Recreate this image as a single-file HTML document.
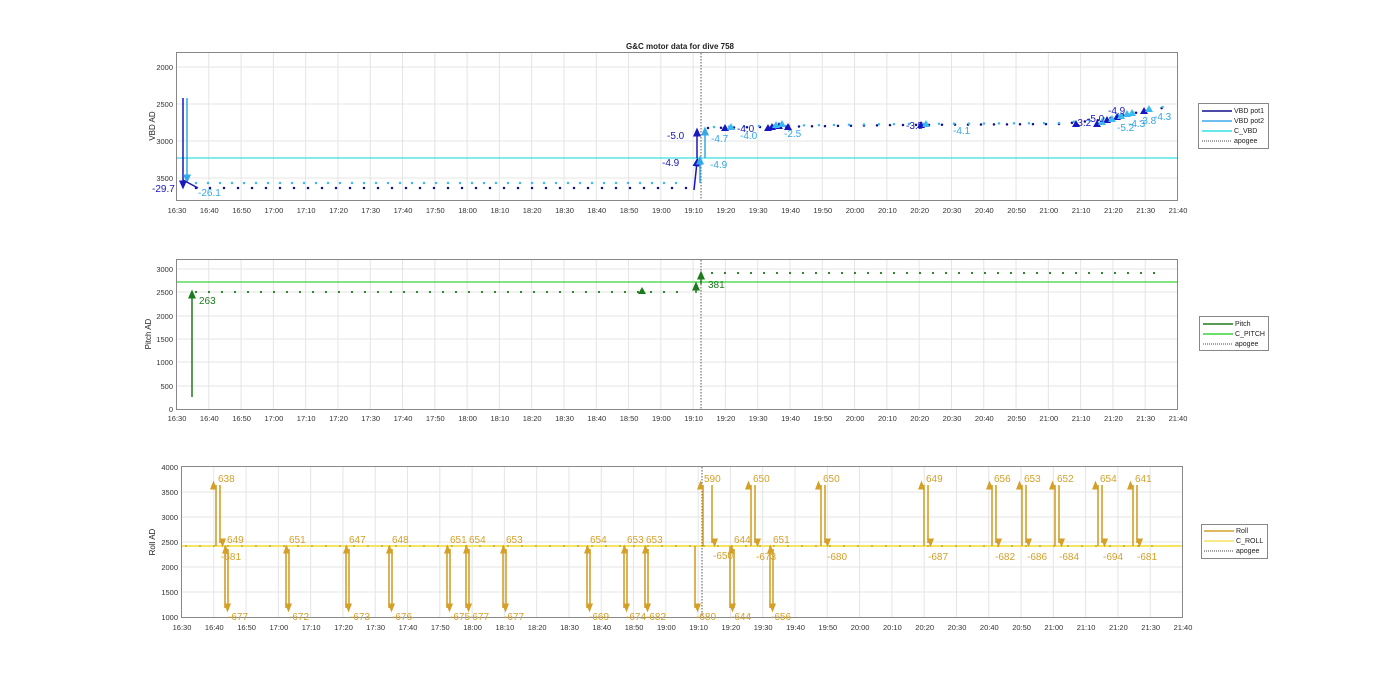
<!DOCTYPE html>
<html><head><meta charset="utf-8"><style>
html,body{margin:0;padding:0;background:#fff;}
svg{display:block;font-family:"Liberation Sans",sans-serif;}
.t{font-size:7.5px;fill:#333;text-anchor:middle;}
.yt{font-size:7.5px;fill:#333;text-anchor:end;}
.ax{fill:#fff;stroke:#888;stroke-width:1;}
.lg{font-size:7px;fill:#222;}
.yl{font-size:8px;fill:#222;text-anchor:middle;}
</style></head><body>
<svg width="1400" height="693" viewBox="0 0 1400 693" xmlns="http://www.w3.org/2000/svg">
<defs>
<pattern id="g1" patternUnits="userSpaceOnUse" x="176" y="0" width="32.29" height="10"><line x1="0.5" y1="0" x2="0.5" y2="10" stroke="#e4e4e4" stroke-width="1"/></pattern>
<pattern id="g3" patternUnits="userSpaceOnUse" x="181" y="0" width="32.29" height="10"><line x1="0.5" y1="0" x2="0.5" y2="10" stroke="#e4e4e4" stroke-width="1"/></pattern>
<marker id="ag" markerUnits="userSpaceOnUse" markerWidth="9" markerHeight="9" refX="4.5" refY="7" orient="auto-start-reverse" viewBox="0 0 9 9"><path d="M0,1 L9,4.5 L0,8 Z" fill="#d4a02a"/></marker>
<marker id="ab" markerUnits="userSpaceOnUse" markerWidth="9" markerHeight="9" refX="4.5" refY="4.5" orient="auto" viewBox="0 0 9 9"><path d="M0,0.5 L9,4.5 L0,8.5 Z" fill="#1818c0"/></marker>
<marker id="ac" markerUnits="userSpaceOnUse" markerWidth="9" markerHeight="9" refX="4.5" refY="4.5" orient="auto" viewBox="0 0 9 9"><path d="M0,0.5 L9,4.5 L0,8.5 Z" fill="#33a8e8"/></marker>
<marker id="agr" markerUnits="userSpaceOnUse" markerWidth="9" markerHeight="9" refX="4.5" refY="4.5" orient="auto" viewBox="0 0 9 9"><path d="M0,0.5 L9,4.5 L0,8.5 Z" fill="#1d7a1d"/></marker>
</defs>

<text x="680" y="49" style="font-size:8px;font-weight:bold;fill:#222;text-anchor:middle">G&amp;C motor data for dive 758</text>

<!-- ===== PLOT 1 ===== -->
<rect class="ax" x="176.5" y="52.5" width="1001" height="148"/>
<rect x="177" y="53" width="1000" height="147" fill="url(#g1)"/>
<g stroke="#e4e4e4"><line x1="177" y1="67" x2="1177" y2="67"/><line x1="177" y1="104" x2="1177" y2="104"/><line x1="177" y1="141" x2="1177" y2="141"/><line x1="177" y1="178" x2="1177" y2="178"/></g>
<g class="yt"><text x="173" y="70">2000</text><text x="173" y="107">2500</text><text x="173" y="144">3000</text><text x="173" y="181">3500</text></g>
<text class="yl" transform="translate(155,126) rotate(-90)">VBD AD</text>
<line x1="177" y1="158" x2="1177" y2="158" stroke="#35e0e0" stroke-width="1.2"/>
<line x1="701" y1="53" x2="701" y2="200" stroke="#555" stroke-dasharray="1.5 1.5"/>
<line x1="196" y1="188" x2="690" y2="188" stroke="#10108a" stroke-width="2.5" stroke-linecap="round" stroke-dasharray="0 14"/>
<line x1="196" y1="183" x2="688" y2="183" stroke="#3cbaf0" stroke-width="2.5" stroke-linecap="round" stroke-dasharray="0 12"/>
<path d="M708,128 L760,127 L900,125 L1060,124 L1100,120 L1140,112 L1168,107" fill="none" stroke="#10108a" stroke-width="2.5" stroke-linecap="round" stroke-dasharray="0 13"/>
<path d="M714,127 L760,126 L900,124 L1060,123 L1100,119 L1140,111 L1168,106" fill="none" stroke="#3cbaf0" stroke-width="2.5" stroke-linecap="round" stroke-dasharray="0 15"/>
<line x1="183" y1="98" x2="183" y2="185" stroke="#1818c0" stroke-width="1.5" marker-end="url(#ab)"/>
<line x1="187" y1="98" x2="187" y2="179" stroke="#33a8e8" stroke-width="1.5" marker-end="url(#ac)"/>
<line x1="183" y1="180" x2="198" y2="188" stroke="#1818c0" stroke-width="1.5"/>
<text x="152" y="192" style="font-size:10px;fill:#1818c0">-29.7</text>
<text x="198" y="196" style="font-size:10px;fill:#33a8e8">-26.1</text>
<line x1="694" y1="190" x2="697" y2="162" stroke="#1818c0" stroke-width="1.5" marker-end="url(#ab)"/>
<line x1="697" y1="158" x2="697" y2="132" stroke="#1818c0" stroke-width="1.5" marker-end="url(#ab)"/>
<line x1="700" y1="183" x2="700" y2="160" stroke="#33a8e8" stroke-width="1.5" marker-end="url(#ac)"/>
<line x1="705" y1="158" x2="705" y2="131" stroke="#33a8e8" stroke-width="1.5" marker-end="url(#ac)"/>
<text x="662" y="166" style="font-size:10px;fill:#1818c0">-4.9</text>
<text x="667" y="139" style="font-size:10px;fill:#1818c0">-5.0</text>
<text x="710" y="168" style="font-size:10px;fill:#33a8e8">-4.9</text>
<text x="711" y="142" style="font-size:10px;fill:#33a8e8">-4.7</text>
<g fill="#1818c0"><path d="M721,131l4,-7l4,7z"/><path d="M764,131l4,-7l4,7z"/><path d="M768,130l4,-7l4,7z"/><path d="M775,129l4,-7l4,7z"/><path d="M784,130l4,-7l4,7z"/><path d="M917,128l4,-7l4,7z"/><path d="M1072,127l4,-7l4,7z"/><path d="M1093,127l4,-7l4,7z"/><path d="M1103,123l4,-7l4,7z"/><path d="M1113,120l4,-7l4,7z"/><path d="M1140,114l4,-7l4,7z"/></g>
<g fill="#3cbaf0"><path d="M727,130l4,-7l4,7z"/><path d="M772,128l4,-7l4,7z"/><path d="M778,127l4,-7l4,7z"/><path d="M922,127l4,-7l4,7z"/><path d="M1098,125l4,-7l4,7z"/><path d="M1108,122l4,-7l4,7z"/><path d="M1117,119l4,-7l4,7z"/><path d="M1123,117l4,-7l4,7z"/><path d="M1128,116l4,-7l4,7z"/><path d="M1145,112l4,-7l4,7z"/></g>
<g style="font-size:10px;fill:#1818c0"><text x="737" y="132">-4.0</text><text x="906" y="129">-3.5</text><text x="1074" y="126">-3.2</text><text x="1087" y="122">-5.0</text><text x="1108" y="114">-4.9</text></g>
<g style="font-size:10px;fill:#33a8e8"><text x="740" y="139">-4.0</text><text x="784" y="137">-2.5</text><text x="953" y="134">-4.1</text><text x="1117" y="131">-5.2</text><text x="1128" y="127">-4.3</text><text x="1139" y="124">-3.8</text><text x="1154" y="120">-4.3</text></g>
<g class="t"><text x="177" y="213">16:30</text><text x="209.3" y="213">16:40</text><text x="241.6" y="213">16:50</text><text x="273.9" y="213">17:00</text><text x="306.2" y="213">17:10</text><text x="338.5" y="213">17:20</text><text x="370.7" y="213">17:30</text><text x="403" y="213">17:40</text><text x="435.3" y="213">17:50</text><text x="467.6" y="213">18:00</text><text x="499.9" y="213">18:10</text><text x="532.2" y="213">18:20</text><text x="564.5" y="213">18:30</text><text x="596.8" y="213">18:40</text><text x="629.1" y="213">18:50</text><text x="661.4" y="213">19:00</text><text x="693.6" y="213">19:10</text><text x="725.9" y="213">19:20</text><text x="758.2" y="213">19:30</text><text x="790.5" y="213">19:40</text><text x="822.8" y="213">19:50</text><text x="855.1" y="213">20:00</text><text x="887.4" y="213">20:10</text><text x="919.7" y="213">20:20</text><text x="952" y="213">20:30</text><text x="984.3" y="213">20:40</text><text x="1016.6" y="213">20:50</text><text x="1048.8" y="213">21:00</text><text x="1081.1" y="213">21:10</text><text x="1113.4" y="213">21:20</text><text x="1145.7" y="213">21:30</text><text x="1178" y="213">21:40</text></g>
<rect x="1198.5" y="103.5" width="70" height="45" fill="#fff" stroke="#888"/>
<line x1="1202" y1="111" x2="1232" y2="111" stroke="#10108a" stroke-width="1.5"/><text class="lg" x="1234" y="113">VBD pot1</text>
<line x1="1202" y1="121" x2="1232" y2="121" stroke="#3ca8e8" stroke-width="1.5"/><text class="lg" x="1234" y="123">VBD pot2</text>
<line x1="1202" y1="131" x2="1232" y2="131" stroke="#35e0e0" stroke-width="1.5"/><text class="lg" x="1234" y="133">C_VBD</text>
<line x1="1202" y1="141" x2="1232" y2="141" stroke="#444" stroke-dasharray="1 1"/><text class="lg" x="1234" y="143">apogee</text>

<!-- ===== PLOT 2 ===== -->
<rect class="ax" x="176.5" y="259.5" width="1001" height="150"/>
<rect x="177" y="260" width="1000" height="149" fill="url(#g1)"/>
<g stroke="#e4e4e4"><line x1="177" y1="269" x2="1177" y2="269"/><line x1="177" y1="292" x2="1177" y2="292"/><line x1="177" y1="316" x2="1177" y2="316"/><line x1="177" y1="339" x2="1177" y2="339"/><line x1="177" y1="362" x2="1177" y2="362"/><line x1="177" y1="386" x2="1177" y2="386"/></g>
<g class="yt"><text x="173" y="272">3000</text><text x="173" y="295">2500</text><text x="173" y="319">2000</text><text x="173" y="342">1500</text><text x="173" y="365">1000</text><text x="173" y="389">500</text><text x="173" y="412">0</text></g>
<text class="yl" transform="translate(151,334) rotate(-90)">Pitch AD</text>
<line x1="177" y1="282" x2="1177" y2="282" stroke="#3ad33a" stroke-width="1.2"/>
<line x1="701" y1="260" x2="701" y2="409" stroke="#555" stroke-dasharray="1.5 1.5"/>
<line x1="196" y1="292" x2="690" y2="292" stroke="#1d7a1d" stroke-width="2.2" stroke-linecap="round" stroke-dasharray="0 13"/>
<line x1="712" y1="273" x2="1165" y2="273" stroke="#1d7a1d" stroke-width="2.2" stroke-linecap="round" stroke-dasharray="0 13"/>
<line x1="192" y1="397" x2="192" y2="294" stroke="#1d7a1d" stroke-width="1.5" marker-end="url(#agr)"/>
<text x="199" y="304" style="font-size:10px;fill:#1d7a1d">263</text>
<path d="M638,294l4,-7l4,7z" fill="#1d7a1d"/>
<line x1="696" y1="293" x2="696" y2="286" stroke="#1d7a1d" stroke-width="1.5" marker-end="url(#agr)"/>
<line x1="701" y1="284" x2="701" y2="275" stroke="#1d7a1d" stroke-width="1.5" marker-end="url(#agr)"/>
<text x="708" y="288" style="font-size:10px;fill:#1d7a1d">381</text>
<g class="t"><text x="177" y="421">16:30</text><text x="209.3" y="421">16:40</text><text x="241.6" y="421">16:50</text><text x="273.9" y="421">17:00</text><text x="306.2" y="421">17:10</text><text x="338.5" y="421">17:20</text><text x="370.7" y="421">17:30</text><text x="403" y="421">17:40</text><text x="435.3" y="421">17:50</text><text x="467.6" y="421">18:00</text><text x="499.9" y="421">18:10</text><text x="532.2" y="421">18:20</text><text x="564.5" y="421">18:30</text><text x="596.8" y="421">18:40</text><text x="629.1" y="421">18:50</text><text x="661.4" y="421">19:00</text><text x="693.6" y="421">19:10</text><text x="725.9" y="421">19:20</text><text x="758.2" y="421">19:30</text><text x="790.5" y="421">19:40</text><text x="822.8" y="421">19:50</text><text x="855.1" y="421">20:00</text><text x="887.4" y="421">20:10</text><text x="919.7" y="421">20:20</text><text x="952" y="421">20:30</text><text x="984.3" y="421">20:40</text><text x="1016.6" y="421">20:50</text><text x="1048.8" y="421">21:00</text><text x="1081.1" y="421">21:10</text><text x="1113.4" y="421">21:20</text><text x="1145.7" y="421">21:30</text><text x="1178" y="421">21:40</text></g>
<rect x="1199.5" y="316.5" width="69" height="34" fill="#fff" stroke="#888"/>
<line x1="1203" y1="324" x2="1233" y2="324" stroke="#1d7a1d" stroke-width="1.5"/><text class="lg" x="1235" y="326">Pitch</text>
<line x1="1203" y1="334" x2="1233" y2="334" stroke="#3ad33a" stroke-width="1.5"/><text class="lg" x="1235" y="336">C_PITCH</text>
<line x1="1203" y1="344" x2="1233" y2="344" stroke="#444" stroke-dasharray="1 1"/><text class="lg" x="1235" y="346">apogee</text>

<!-- ===== PLOT 3 ===== -->
<rect class="ax" x="181.5" y="466.5" width="1001" height="151"/>
<rect x="182" y="467" width="1000" height="150" fill="url(#g3)"/>
<g stroke="#e4e4e4"><line x1="182" y1="492" x2="1182" y2="492"/><line x1="182" y1="517" x2="1182" y2="517"/><line x1="182" y1="542" x2="1182" y2="542"/><line x1="182" y1="567" x2="1182" y2="567"/><line x1="182" y1="592" x2="1182" y2="592"/></g>
<g class="yt"><text x="178" y="470">4000</text><text x="178" y="495">3500</text><text x="178" y="520">3000</text><text x="178" y="545">2500</text><text x="178" y="570">2000</text><text x="178" y="595">1500</text><text x="178" y="620">1000</text></g>
<text class="yl" transform="translate(155,542) rotate(-90)">Roll AD</text>
<line x1="182" y1="546" x2="1182" y2="546" stroke="#f5e460" stroke-width="2"/>
<line x1="702" y1="467" x2="702" y2="617" stroke="#555" stroke-dasharray="1.5 1.5"/>
<line x1="186" y1="546" x2="1165" y2="546" stroke="#b09a40" stroke-width="1.8" stroke-linecap="round" stroke-dasharray="0 14"/>
<g stroke="#d4a02a" stroke-width="1.6" fill="none">
<path d="M216,546V485" marker-end="url(#ag)"/><path d="M220,485V543" marker-end="url(#ag)"/>
<path d="M751,546V485" marker-end="url(#ag)"/><path d="M755,485V543" marker-end="url(#ag)"/>
<path d="M821,546V485" marker-end="url(#ag)"/><path d="M825,485V543" marker-end="url(#ag)"/>
<path d="M924,546V485" marker-end="url(#ag)"/><path d="M928,485V543" marker-end="url(#ag)"/>
<path d="M992,546V485" marker-end="url(#ag)"/><path d="M996,485V543" marker-end="url(#ag)"/>
<path d="M1022,546V485" marker-end="url(#ag)"/><path d="M1026,485V543" marker-end="url(#ag)"/>
<path d="M1055,546V485" marker-end="url(#ag)"/><path d="M1059,485V543" marker-end="url(#ag)"/>
<path d="M1098,546V485" marker-end="url(#ag)"/><path d="M1102,485V543" marker-end="url(#ag)"/>
<path d="M1133,546V485" marker-end="url(#ag)"/><path d="M1137,485V543" marker-end="url(#ag)"/>
<path d="M225,546V608" marker-end="url(#ag)"/><path d="M228,608V549" marker-end="url(#ag)"/>
<path d="M286,546V608" marker-end="url(#ag)"/><path d="M289,608V549" marker-end="url(#ag)"/>
<path d="M346,546V608" marker-end="url(#ag)"/><path d="M349,608V549" marker-end="url(#ag)"/>
<path d="M389,546V608" marker-end="url(#ag)"/><path d="M392,608V549" marker-end="url(#ag)"/>
<path d="M447,546V608" marker-end="url(#ag)"/><path d="M450,608V549" marker-end="url(#ag)"/>
<path d="M466,546V608" marker-end="url(#ag)"/><path d="M469,608V549" marker-end="url(#ag)"/>
<path d="M503,546V608" marker-end="url(#ag)"/><path d="M506,608V549" marker-end="url(#ag)"/>
<path d="M587,546V608" marker-end="url(#ag)"/><path d="M590,608V549" marker-end="url(#ag)"/>
<path d="M624,546V608" marker-end="url(#ag)"/><path d="M627,608V549" marker-end="url(#ag)"/>
<path d="M645,546V608" marker-end="url(#ag)"/><path d="M648,608V549" marker-end="url(#ag)"/>
<path d="M730,546V608" marker-end="url(#ag)"/><path d="M734,608V549" marker-end="url(#ag)"/>
<path d="M770,546V608" marker-end="url(#ag)"/><path d="M773,608V549" marker-end="url(#ag)"/>
<path d="M695,546V608" marker-end="url(#ag)"/>
<path d="M703,546V485" marker-end="url(#ag)"/>
<path d="M712,485V543" marker-end="url(#ag)"/>
</g>
<g style="font-size:10px;fill:#d4a02a">
<text x="218" y="482">638</text><text x="221" y="560">-681</text>
<text x="753" y="482">650</text><text x="756" y="560">-673</text>
<text x="823" y="482">650</text><text x="827" y="560">-680</text>
<text x="926" y="482">649</text><text x="928" y="560">-687</text>
<text x="994" y="482">656</text><text x="995" y="560">-682</text>
<text x="1024" y="482">653</text><text x="1027" y="560">-686</text>
<text x="1057" y="482">652</text><text x="1059" y="560">-684</text>
<text x="1100" y="482">654</text><text x="1103" y="560">-694</text>
<text x="1135" y="482">641</text><text x="1137" y="560">-681</text>
<text x="227" y="543">649</text><text x="228" y="620">-677</text>
<text x="289" y="543">651</text><text x="289" y="620">-672</text>
<text x="349" y="543">647</text><text x="350" y="620">-673</text>
<text x="392" y="543">648</text><text x="392" y="620">-676</text>
<text x="450" y="543">651</text><text x="450" y="620">-675</text>
<text x="469" y="543">654</text><text x="469" y="620">-677</text>
<text x="506" y="543">653</text><text x="504" y="620">-677</text>
<text x="590" y="543">654</text><text x="589" y="620">-669</text>
<text x="627" y="543">653</text><text x="626" y="620">-674</text>
<text x="646" y="543">653</text><text x="646" y="620">-682</text>
<text x="734" y="543">644</text><text x="731" y="620">-644</text>
<text x="773" y="543">651</text><text x="771" y="620">-656</text>
<text x="696" y="620">-680</text>
<text x="704" y="482">590</text>
<text x="713" y="559">-650</text>
</g>
<g class="t"><text x="182" y="630">16:30</text><text x="214.3" y="630">16:40</text><text x="246.6" y="630">16:50</text><text x="278.9" y="630">17:00</text><text x="311.2" y="630">17:10</text><text x="343.5" y="630">17:20</text><text x="375.7" y="630">17:30</text><text x="408" y="630">17:40</text><text x="440.3" y="630">17:50</text><text x="472.6" y="630">18:00</text><text x="504.9" y="630">18:10</text><text x="537.2" y="630">18:20</text><text x="569.5" y="630">18:30</text><text x="601.8" y="630">18:40</text><text x="634.1" y="630">18:50</text><text x="666.4" y="630">19:00</text><text x="698.6" y="630">19:10</text><text x="730.9" y="630">19:20</text><text x="763.2" y="630">19:30</text><text x="795.5" y="630">19:40</text><text x="827.8" y="630">19:50</text><text x="860.1" y="630">20:00</text><text x="892.4" y="630">20:10</text><text x="924.7" y="630">20:20</text><text x="957" y="630">20:30</text><text x="989.3" y="630">20:40</text><text x="1021.6" y="630">20:50</text><text x="1053.8" y="630">21:00</text><text x="1086.1" y="630">21:10</text><text x="1118.4" y="630">21:20</text><text x="1150.7" y="630">21:30</text><text x="1183" y="630">21:40</text></g>
<rect x="1201.5" y="524.5" width="66" height="34" fill="#fff" stroke="#888"/>
<line x1="1204" y1="531" x2="1234" y2="531" stroke="#d4a02a" stroke-width="1.5"/><text class="lg" x="1236" y="533">Roll</text>
<line x1="1204" y1="541" x2="1234" y2="541" stroke="#f5e460" stroke-width="1.5"/><text class="lg" x="1236" y="543">C_ROLL</text>
<line x1="1204" y1="551" x2="1234" y2="551" stroke="#444" stroke-dasharray="1 1"/><text class="lg" x="1236" y="553">apogee</text>
</svg>
</body></html>
